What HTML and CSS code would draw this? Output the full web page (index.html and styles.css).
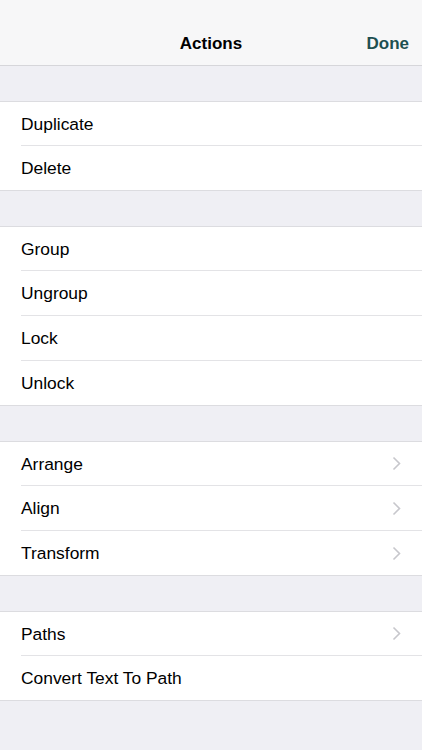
FILE: index.html
```html
<!DOCTYPE html>
<html>
<head>
<meta charset="utf-8">
<link rel="stylesheet" href="styles.css">
</head>
<body>
<div class="screen">
  <header class="navbar">
    <span class="nav-title">Actions</span>
    <span class="nav-done">Done</span>
  </header>
  <div class="content">
    <ul class="section">
      <li class="row"><span>Duplicate</span></li>
      <li class="row"><span>Delete</span></li>
    </ul>
    <ul class="section">
      <li class="row"><span>Group</span></li>
      <li class="row"><span>Ungroup</span></li>
      <li class="row"><span>Lock</span></li>
      <li class="row"><span>Unlock</span></li>
    </ul>
    <ul class="section">
      <li class="row"><span>Arrange</span><svg class="chev" viewBox="0 0 9 15"><path d="M1.5 1.5 L7.5 7.5 L1.5 13.5" /></svg></li>
      <li class="row"><span>Align</span><svg class="chev" viewBox="0 0 9 15"><path d="M1.5 1.5 L7.5 7.5 L1.5 13.5" /></svg></li>
      <li class="row"><span>Transform</span><svg class="chev" viewBox="0 0 9 15"><path d="M1.5 1.5 L7.5 7.5 L1.5 13.5" /></svg></li>
    </ul>
    <ul class="section">
      <li class="row"><span>Paths</span><svg class="chev" viewBox="0 0 9 15"><path d="M1.5 1.5 L7.5 7.5 L1.5 13.5" /></svg></li>
      <li class="row"><span>Convert Text To Path</span></li>
    </ul>
  </div>
</div>
</body>
</html>
```
FILE: styles.css
```css
* { box-sizing: border-box; }
html, body {
  margin: 0;
  padding: 0;
  background: #efeff4;
  font-family: "Liberation Sans", Arial, sans-serif;
  color: #000;
}
.screen {
  width: 422px;
  height: 750px;
  overflow: hidden;
  background: #efeff4;
}
.navbar {
  height: 66px;
  background: #f7f7f8;
  border-bottom: 1px solid #d6d6da;
  display: flex;
  align-items: center;
  justify-content: center;
  position: relative;
  padding-top: 22px;
}
.nav-title {
  font-weight: bold;
  font-size: 17px;
}
.nav-done {
  position: absolute;
  right: 13px;
  top: 34px;
  font-size: 17px;
  font-weight: bold;
  color: #1d4f50;
}
.content {
  padding-top: 35px;
  display: flex;
  flex-direction: column;
  gap: 35px;
}
.section {
  list-style: none;
  margin: 0;
  padding: 0;
  background: #fff;
  border-top: 1px solid #dcdce0;
  border-bottom: 1px solid #dcdce0;
}
.row {
  height: 45px;
  margin-left: 21px;
  padding-right: 21px;
  padding-top: 1px;
  display: flex;
  align-items: center;
  justify-content: space-between;
  font-size: 17.4px;
  border-bottom: 1px solid #e3e3e6;
}
.row:last-child { border-bottom: none; height: 44px; }
.section .row:first-child { height: 44px; }
.chev {
  width: 9px;
  height: 15px;
  margin-top: -1px;
  fill: none;
  stroke: #c7c7cc;
  stroke-width: 1.6;
}
```
